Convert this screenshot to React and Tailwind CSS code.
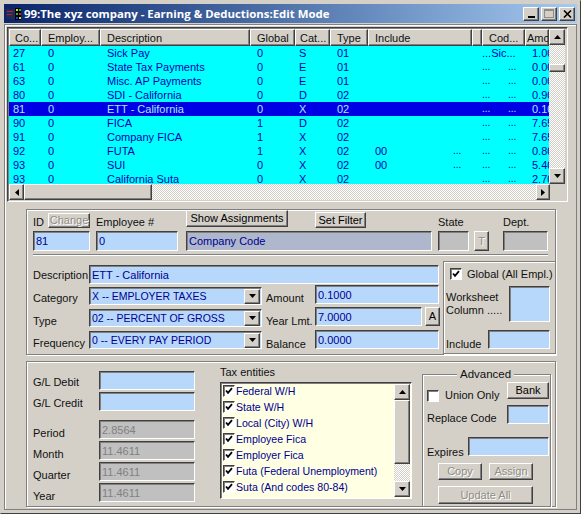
const RAISED = "border border-t-white border-l-white border-r-[#404040] border-b-[#404040] shadow-[inset_-1px_-1px_0_#808080] bg-[#d4d0c8]";
const SUNK = "border border-t-[#404040] border-l-[#404040] border-r-white border-b-white shadow-[inset_1px_1px_0_#808080]";
const DITHER = "bg-[repeating-conic-gradient(#d4d0c8_0_25%,#ffffff_0_50%)] bg-[length:2px_2px]";
const GROOVE = "border border-[#808080] shadow-[inset_1px_1px_0_#fff,1px_1px_0_#fff]";
const COLS = "grid grid-cols-[32px_59px_150px_45px_35px_38px_104px_10px_43px_24px]";

const ROWS = [
  ["27", "0", "Sick Pay", "0", "S", "01", "", false, "...Sic...", "1.00"],
  ["61", "0", "State Tax Payments", "0", "E", "01", "", false, "", "0.00"],
  ["63", "0", "Misc. AP Payments", "0", "E", "01", "", false, "", "0.00"],
  ["80", "0", "SDI - California", "0", "D", "02", "", false, "", "0.90"],
  ["81", "0", "ETT - California", "0", "X", "02", "", false, "", "0.10"],
  ["90", "0", "FICA", "1", "D", "02", "", false, "", "7.65"],
  ["91", "0", "Company FICA", "1", "X", "02", "", false, "", "7.65"],
  ["92", "0", "FUTA", "1", "X", "02", "00", true, "", "0.80"],
  ["93", "0", "SUI", "0", "X", "02", "00", true, "", "5.40"],
  ["93", "0", "California Suta", "0", "X", "02", "", false, "", "2.70"],
];

function Arrow({ dir = "down", cls = "" }) {
  const pts = { up: "0,4 7,4 3.5,0", down: "0,0 7,0 3.5,4", left: "4,0 4,7 0,3.5", right: "0,0 0,7 4,3.5" }[dir];
  const w = dir === "up" || dir === "down" ? 7 : 4;
  const h = dir === "up" || dir === "down" ? 4 : 7;
  return (
    <svg width={w} height={h} viewBox={`0 0 ${w} ${h}`} className={cls}>
      <polygon points={pts} fill="#000" />
    </svg>
  );
}

function ScrollBtn({ dir, cls }) {
  return (
    <div className={`${RAISED} flex items-center justify-center shrink-0 ${cls}`}>
      <Arrow dir={dir} />
    </div>
  );
}

function Btn({ children, cls = "", disabled }) {
  return (
    <div className={`${RAISED} flex items-center justify-center shrink-0 leading-none whitespace-nowrap ${disabled ? "text-[#8f8c86] [text-shadow:1px_1px_0_#fff]" : "text-black"} ${cls}`}>
      {children}
    </div>
  );
}

function Input({ value = "", cls = "", tone = "bg-[#b7d7fb] text-[#000090]" }) {
  return (
    <div className={`${SUNK} ${tone} shrink-0 flex items-center pl-[2px] overflow-hidden whitespace-nowrap ${cls}`}>
      {value}
    </div>
  );
}

function Select({ value, cls = "" }) {
  return (
    <div className={`${SUNK} bg-[#b7d7fb] text-[#000090] w-[173px] h-[18px] shrink-0 flex items-center justify-between pl-[2px] pr-[1px] text-[10.5px] ${cls}`}>
      <span className="whitespace-nowrap">{value}</span>
      <ScrollBtn dir="down" cls="w-[16px] h-[15px]" />
    </div>
  );
}

function Check({ checked, cls = "" }) {
  return (
    <div className={`${SUNK} bg-white w-[12px] h-[12px] shrink-0 flex items-center justify-center ${cls}`}>
      {checked && (
        <svg width="8" height="8" viewBox="0 0 8 8">
          <path d="M1 3.5 L3 5.8 L7 1.2" fill="none" stroke="#000" strokeWidth="1.8" />
        </svg>
      )}
    </div>
  );
}

function GridRow({ r, selected }) {
  const color = selected ? "bg-[#0000e4] text-[#a8e8ff]" : "bg-[#00ffff] text-[#0000b0]";
  return (
    <div className={`${COLS} h-[14px] leading-[14px] shrink-0 whitespace-nowrap ${color}`}>
      <div className="pl-[4px]">{r[0]}</div>
      <div className="pl-[7px]">{r[1]}</div>
      <div className="pl-[7px]">{r[2]}</div>
      <div className="pl-[7px]">{r[3]}</div>
      <div className="pl-[4px]">{r[4]}</div>
      <div className="pl-[7px]">{r[5]}</div>
      <div className="flex pl-[7px]">
        <span className="w-[78px]">{r[6]}</span>
        {r[7] && <span className="text-[10px]">...</span>}
      </div>
      <div></div>
      <div className="flex">
        {r[8] ? <span>{r[8]}</span> : (
          <>
            <span className="w-[26px] text-[10px]">...</span>
            <span className="text-[10px]">...</span>
          </>
        )}
      </div>
      <div className="pl-[7px] overflow-hidden">{r[9]}</div>
    </div>
  );
}

function Head({ children, cls = "" }) {
  return <div className={`${RAISED} h-[17px] flex items-center overflow-hidden whitespace-nowrap ${cls}`}>{children}</div>;
}

const TAXES = ["Federal W/H", "State W/H", "Local (City) W/H", "Employee Fica", "Employer Fica", "Futa (Federal Unemployment)", "Suta (And codes 80-84)"];

export default function App() {
  return (
    <div className="w-[581px] h-[514px] overflow-hidden bg-[#d4d0c8] font-['Liberation_Sans',Arial,sans-serif] text-[11px] leading-[14px] text-[#101010] border border-[#404040] border-l-[#d4d0c8] border-t-[#d4d0c8] pl-[3px] pr-[3px] pt-[3px] flex flex-col">
      {/* title bar */}
      <div className="h-[19px] shrink-0 bg-gradient-to-r from-[#0a246a] to-[#a6caf0] flex items-center pl-[2px] pr-[2px]">
        <svg width="16" height="16" viewBox="0 0 16 16" className="shrink-0">
          <rect x="0" y="3" width="9" height="10" fill="#222a55" />
          <rect x="1" y="5" width="6" height="1" fill="#c02030" />
          <rect x="1" y="8" width="5" height="1" fill="#c02030" />
          <rect x="9" y="2" width="6" height="12" fill="#000" />
          <rect x="10" y="3" width="2" height="2" fill="#e0e020" />
          <rect x="13" y="3" width="2" height="2" fill="#20c020" />
          <rect x="10" y="7" width="2" height="2" fill="#20c020" />
          <rect x="13" y="7" width="2" height="2" fill="#e02020" />
          <rect x="10" y="11" width="2" height="2" fill="#2040e0" />
          <rect x="13" y="11" width="2" height="2" fill="#e0e020" />
        </svg>
        <span className="ml-[2px] text-white font-['Open_Sans',sans-serif] font-bold text-[11.4px] whitespace-nowrap">99:The xyz company - Earning &amp; Deductions:Edit Mode</span>
        <div className="ml-auto flex items-center">
          <Btn cls="w-[16px] h-[14px] items-end pb-[2px]">
            <span className="block w-[7px] h-[2px] bg-black"></span>
          </Btn>
          <Btn cls="w-[16px] h-[14px] ml-[2px]">
            <span className="block w-[10px] h-[9px] border border-[#8f8c86] border-t-2"></span>
          </Btn>
          <Btn cls="w-[16px] h-[14px] ml-[2px]">
            <svg width="9" height="8" viewBox="0 0 9 8"><path d="M1 0.5 L8 7.5 M8 0.5 L1 7.5" stroke="#000" strokeWidth="1.6" /></svg>
          </Btn>
        </div>
      </div>

      {/* client frame */}
      <div className="mt-[1px] h-[486px] w-[573px] shrink-0 border border-[#808080] shadow-[inset_1px_1px_0_#fff] flex flex-col">
        {/* grid */}
        <div className={`${SUNK} mt-[2px] ml-[2px] w-[561px] h-[175px] shrink-0 p-[1px] flex flex-col`}>
          <div className="flex h-[155px] shrink-0">
            <div className="w-[540px] shrink-0 overflow-hidden">
              <div className={`${COLS} h-[17px]`}>
                <Head cls="pl-[5px]">Co...</Head>
                <Head cls="pl-[6px]">Employ...</Head>
                <Head cls="pl-[6px]">Description</Head>
                <Head cls="pl-[6px]">Global</Head>
                <Head cls="pl-[4px]">Cat...</Head>
                <Head cls="pl-[6px]">Type</Head>
                <Head cls="pl-[6px]">Include</Head>
                <Head></Head>
                <Head cls="pl-[6px]">Cod...</Head>
                <Head cls="pl-[1px]">Amount</Head>
              </div>
              <div className="h-[138px] overflow-hidden">
                {ROWS.map((r, i) => <GridRow key={i} r={r} selected={i === 4} />)}
              </div>
            </div>
            <div className={`${DITHER} w-[16px] shrink-0 flex flex-col`}>
              <ScrollBtn dir="up" cls="h-[16px]" />
              <div className={`${RAISED} h-[8px] mt-[19px] shrink-0`}></div>
              <ScrollBtn dir="down" cls="h-[16px] mt-auto" />
            </div>
          </div>
          <div className={`${DITHER} h-[16px] w-[541px] shrink-0 flex`}>
            <ScrollBtn dir="left" cls="w-[15px]" />
            <div className={`${RAISED} w-[128px] shrink-0`}></div>
            <ScrollBtn dir="right" cls="w-[14px] ml-auto" />
          </div>
        </div>

        {/* top panel */}
        <div className={`${GROOVE} mt-[7px] ml-[21px] w-[530px] h-[146px] shrink-0 flex flex-col`}>
          <div className="flex items-end h-[21px] pl-[6px] shrink-0">
            <span className="w-[15px] mb-[2px]">ID</span>
            <Btn disabled cls="w-[42px] h-[15px] mb-[3px]">Change</Btn>
            <span className="w-[90px] ml-[6px] mb-[2px]">Employee #</span>
            <Btn cls="w-[102px] h-[17px] mb-[4px]">Show Assignments</Btn>
            <Btn cls="w-[51px] h-[16px] mb-[3px] ml-[27px]">Set Filter</Btn>
            <span className="w-[65px] ml-[72px] mb-[2px]">State</span>
            <span className="mb-[2px]">Dept.</span>
          </div>
          <div className="flex h-[20px] pl-[6px] shrink-0">
            <Input value="81" cls="w-[57px] h-[20px]" />
            <Input value="0" cls="w-[82px] h-[20px] ml-[6px]" />
            <Input value="Company Code" cls="w-[246px] h-[20px] ml-[8px]" tone="bg-[#afb7cd] text-[#000090]" />
            <Input cls="w-[31px] h-[20px] ml-[6px]" tone="bg-[#c0c0c0]" />
            <Btn disabled cls="w-[15px] h-[20px] ml-[5px]">T</Btn>
            <Input cls="w-[45px] h-[20px] ml-[14px]" tone="bg-[#c0c0c0]" />
          </div>
          <div className="ml-[6px] mt-[3px] w-[515px] h-[2px] shrink-0 border-t border-[#808080] border-b border-b-white"></div>
          <div className="flex mt-[5px] flex-1">
            <div className="w-[416px] shrink-0 flex flex-col">
              <div className="flex h-[20px] mt-[4px] pl-[6px]">
                <span className="w-[56px] mt-[3px]">Description</span>
                <Input value="ETT - California" cls="w-[350px] h-[19px]" />
              </div>
              <div className="flex h-[22px] pl-[6px]">
                <span className="w-[56px] mt-[6px]">Category</span>
                <Select value="X -- EMPLOYER TAXES" cls="mt-[2px]" />
                <span className="w-[53px] ml-[4px] mt-[6px]">Amount</span>
                <Input value="0.1000" cls="w-[124px] h-[19px] -ml-[4px]" />
              </div>
              <div className="flex h-[23px] pl-[6px]">
                <span className="w-[56px] mt-[7px]">Type</span>
                <Select value="02 -- PERCENT OF GROSS" cls="mt-[2px]" />
                <span className="w-[53px] ml-[4px] mt-[7px] whitespace-nowrap">Year Lmt.</span>
                <Input value="7.0000" cls="w-[107px] h-[19px] -ml-[4px]" />
                <Btn cls="w-[15px] h-[19px] ml-[3px]">A</Btn>
              </div>
              <div className="flex h-[22px] pl-[6px]">
                <span className="w-[56px] mt-[6px]">Frequency</span>
                <Select value="0 -- EVERY PAY PERIOD" cls="mt-[1px]" />
                <span className="w-[53px] ml-[4px] mt-[7px]">Balance</span>
                <Input value="0.0000" cls="w-[124px] h-[19px] -ml-[4px]" />
              </div>
            </div>
            <div className={`${GROOVE} w-[113px] h-[93px] shrink-0 flex flex-col pl-[2px]`}>
              <div className="flex items-center mt-[5px] ml-[4px]">
                <Check checked />
                <span className="ml-[5px] whitespace-nowrap">Global (All Empl.)</span>
              </div>
              <div className="flex mt-[5px]">
                <div className="w-[63px] mt-[5px] leading-[13px] whitespace-nowrap">Worksheet<br />Column .....</div>
                <Input cls="w-[41px] h-[36px]" />
              </div>
              <div className="flex mt-[8px]">
                <span className="w-[42px] mt-[7px]">Include</span>
                <Input cls="w-[62px] h-[19px]" />
              </div>
            </div>
          </div>
        </div>

        {/* bottom panel */}
        <div className={`${GROOVE} mt-[6px] ml-[21px] w-[530px] h-[146px] shrink-0 flex`}>
          <div className="w-[193px] shrink-0 pl-[6px] pt-[9px] flex flex-col">
            <div className="flex h-[21px]">
              <span className="w-[66px] mt-[4px]">G/L Debit</span>
              <Input cls="w-[96px] h-[19px]" />
            </div>
            <div className="flex h-[21px]">
              <span className="w-[66px] mt-[4px]">G/L Credit</span>
              <Input cls="w-[96px] h-[19px]" />
            </div>
            {[["Period", "2.8564", "mt-[7px]"], ["Month", "11.4611", ""], ["Quarter", "11.4611", ""], ["Year", "11.4611", ""]].map(([l, v, m]) => (
              <div key={l} className={`flex h-[21px] ${m}`}>
                <span className="w-[66px] mt-[6px]">{l}</span>
                <Input value={v} cls="w-[96px] h-[19px]" tone="bg-[#c0c0c0] text-[#808080]" />
              </div>
            ))}
          </div>
          <div className="w-[194px] shrink-0 flex flex-col pt-[2px]">
            <span className="h-[14px] mt-[1px]">Tax entities</span>
            <div className={`${SUNK} bg-[#ffffe4] w-[192px] h-[117px] mt-[3px] flex`}>
              <div className="flex-1 pl-[2px] text-[#000090] text-[10.6px]">
                {TAXES.map((t) => (
                  <div key={t} className="flex items-center h-[16px] whitespace-nowrap">
                    <Check checked cls="w-[11px] h-[11px]" />
                    <span className="ml-[1px]">{t}</span>
                  </div>
                ))}
              </div>
              <div className={`${DITHER} w-[16px] shrink-0 flex flex-col mr-[1px] my-[1px]`}>
                <ScrollBtn dir="up" cls="h-[16px]" />
                <div className={`${RAISED} h-[64px] shrink-0`}></div>
                <ScrollBtn dir="down" cls="h-[16px] mt-auto" />
              </div>
            </div>
          </div>
          <div className={`${GROOVE} relative w-[129px] h-[133px] ml-[8px] mt-[12px] shrink-0 flex flex-col pl-[4px]`}>
            <span className="absolute -top-[8px] left-[34px] px-[3px] bg-[#d4d0c8] text-[11.5px]">Advanced</span>
            <div className="flex h-[17px] mt-[7px] shrink-0">
              <Check cls="mt-[8px]" />
              <span className="w-[62px] ml-[6px] mt-[6px] whitespace-nowrap">Union Only</span>
              <Btn cls="w-[42px] h-[17px]">Bank</Btn>
            </div>
            <div className="flex h-[19px] mt-[6px] shrink-0">
              <span className="w-[80px] mt-[6px] whitespace-nowrap">Replace Code</span>
              <Input cls="w-[42px] h-[19px]" />
            </div>
            <div className="flex h-[19px] mt-[13px] shrink-0">
              <span className="w-[41px] mt-[8px]">Expires</span>
              <Input cls="w-[81px] h-[19px]" />
            </div>
            <div className="flex mt-[7px] ml-[11px] shrink-0">
              <Btn disabled cls="w-[44px] h-[17px]">Copy</Btn>
              <Btn disabled cls="w-[44px] h-[17px] ml-[7px]">Assign</Btn>
            </div>
            <Btn disabled cls="w-[95px] h-[18px] mt-[6px] ml-[11px]">Update All</Btn>
          </div>
        </div>
      </div>
    </div>
  );
}
